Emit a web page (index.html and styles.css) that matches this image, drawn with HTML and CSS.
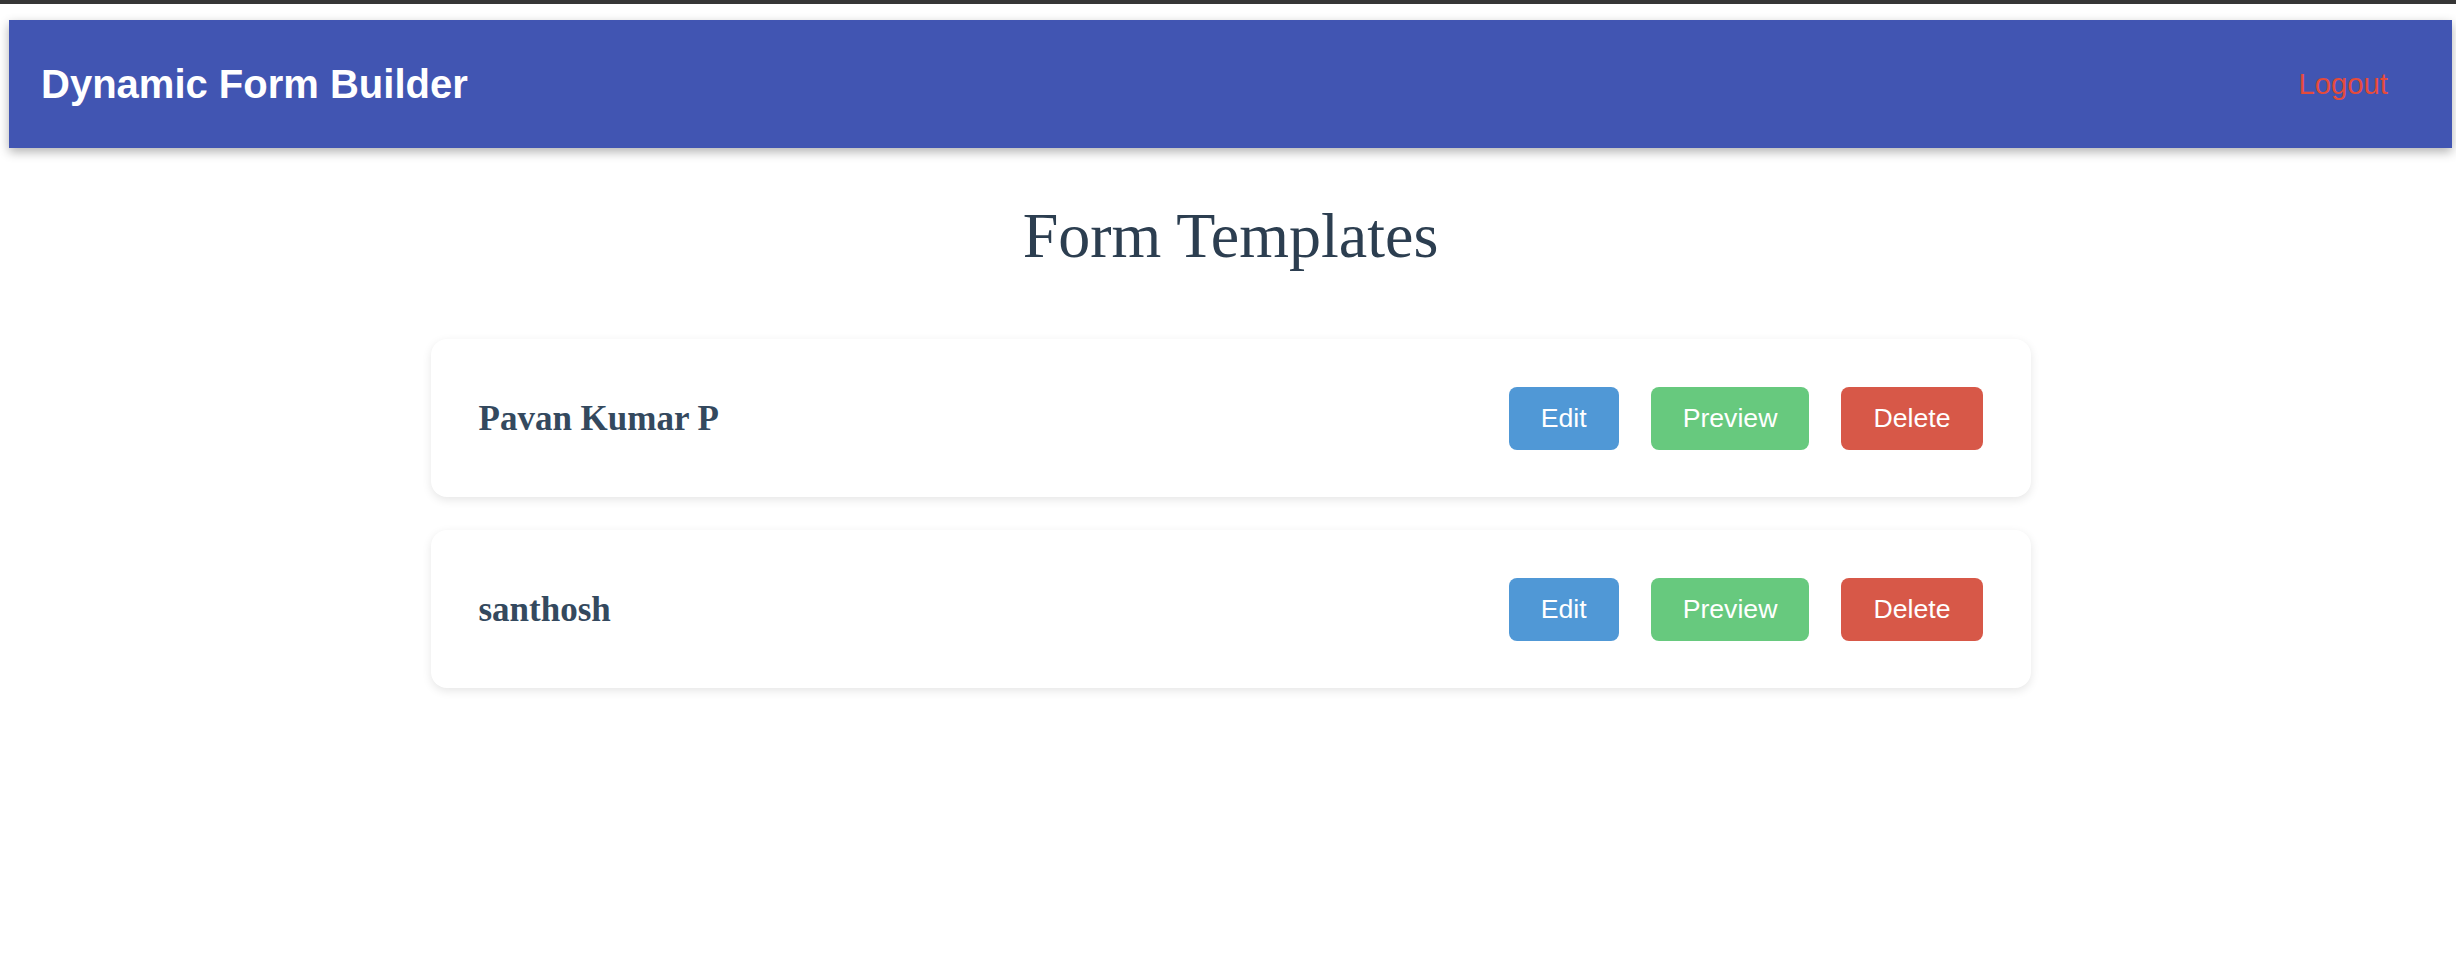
FILE: index.html
```html
<!DOCTYPE html>
<html lang="en">
<head>
<meta charset="utf-8">
<title>Dynamic Form Builder</title>
<link rel="stylesheet" href="styles.css">
</head>
<body>
<div class="topstrip"></div>
<div class="page">
  <header class="navbar">
    <div class="brand">Dynamic Form Builder</div>
    <button class="logout">Logout</button>
  </header>
  <main class="content">
    <h1 class="title">Form Templates</h1>
    <div class="card">
      <h3 class="card-name">Pavan Kumar P</h3>
      <div class="actions">
        <button class="btn btn-edit">Edit</button>
        <button class="btn btn-preview">Preview</button>
        <button class="btn btn-delete">Delete</button>
      </div>
    </div>
    <div class="card">
      <h3 class="card-name">santhosh</h3>
      <div class="actions">
        <button class="btn btn-edit">Edit</button>
        <button class="btn btn-preview">Preview</button>
        <button class="btn btn-delete">Delete</button>
      </div>
    </div>
  </main>
</div>
</body>
</html>
```

FILE: styles.css
```css
html, body {
  margin: 0;
  padding: 0;
  background: #ffffff;
}

body {
  font-family: "Liberation Serif", "Times New Roman", serif;
}

.topstrip {
  height: 4px;
  background: #363636;
}

.page {
  padding: 16px 4px 0 9px;
}

.navbar {
  height: 128px;
  box-sizing: border-box;
  background: #4155b2;
  display: flex;
  align-items: center;
  justify-content: space-between;
  padding: 0 32px;
  box-shadow: 0 4px 10px rgba(0, 0, 0, 0.3);
}

.brand {
  font-family: "Liberation Sans", Arial, sans-serif;
  font-weight: bold;
  font-size: 40px;
  color: #ffffff;
}

.logout {
  font-family: "Liberation Sans", Arial, sans-serif;
  font-size: 29.3px;
  color: #e54b3b;
  background: none;
  border: none;
  padding: 16px 32px;
  cursor: pointer;
}

.content {
  width: 1600px;
  margin: 0 auto;
  padding-top: 51px;
}

.title {
  margin: 0 0 66px 0;
  text-align: center;
  font-weight: normal;
  font-size: 64px;
  color: #2c3e50;
}

.card {
  display: flex;
  align-items: center;
  justify-content: space-between;
  background: #ffffff;
  border-radius: 16px;
  padding: 48px 48px 47px 48px;
  margin-bottom: 33px;
  box-shadow: 0 3px 10px rgba(0, 0, 0, 0.1);
}

.card-name {
  margin: 0;
  font-size: 35px;
  font-weight: bold;
  color: #34495e;
}

.actions {
  display: flex;
  gap: 32px;
}

.btn {
  font-family: "Liberation Sans", Arial, sans-serif;
  font-size: 26.67px;
  line-height: 31px;
  color: #ffffff;
  border: none;
  border-radius: 8px;
  padding: 16px 32px;
  cursor: pointer;
}

.btn-edit {
  background: #5098d6;
}

.btn-preview {
  background: #67c97e;
}

.btn-delete {
  background: #d75848;
}
```
